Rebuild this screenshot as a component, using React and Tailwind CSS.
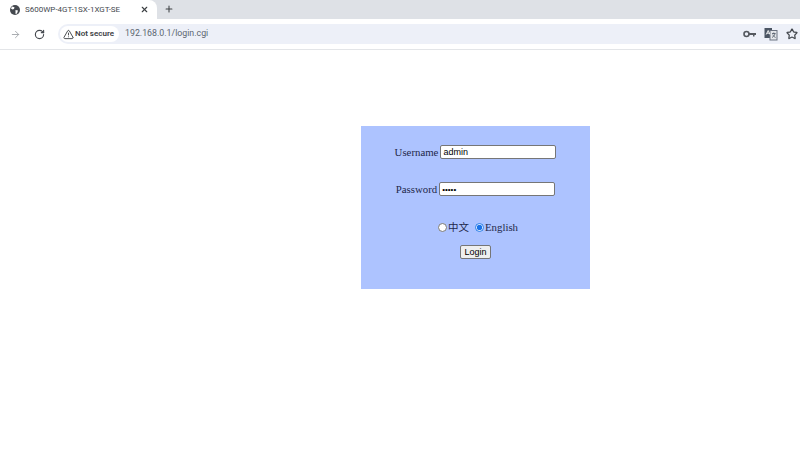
import React from 'react';
import { ArrowRight, RotateCw, X, Plus, TriangleAlert, Star } from 'lucide-react';

function GlobeIcon() {
  return (
    <svg width="10" height="10" viewBox="0 0 10 10" className="shrink-0">
      <circle cx="5" cy="5" r="5" fill="#45494f" />
      <path d="M2 1.5 L4.5 2.2 L4 4 L2.5 4.5 L1 3.5 Z M5.5 5 L8 5.5 L7 8.5 L5.5 9 Z" fill="#fff" />
    </svg>
  );
}

function KeyIcon() {
  return (
    <svg width="13" height="8" viewBox="0 0 13 8" className="shrink-0">
      <circle cx="3.5" cy="4" r="2.5" fill="none" stroke="#55595f" strokeWidth="1.6" />
      <path d="M6 3 H13 V5 H11.5 V6.5 H10 V5 H6 Z" fill="#55595f" />
    </svg>
  );
}

function TranslateIcon() {
  return (
    <svg width="14" height="14" viewBox="0 0 14 14" className="shrink-0">
      <rect x="0.5" y="1" width="7.5" height="10" fill="#4b5563" />
      <rect x="6" y="3.5" width="7" height="9.5" fill="#e5e7eb" stroke="#6b7280" strokeWidth="1" />
      <path d="M2.2 7.5 L4.2 3.5 L6 7.5 M3 6.2 H5.4" stroke="#fff" strokeWidth="0.9" fill="none" />
      <path d="M8 6.5 H11.5 M9.8 5.5 V6.5 M11 6.5 C10.6 8.5 9.4 9.8 8 10.5 M8.8 7.5 C9.4 9 10.4 10 11.6 10.5" stroke="#4b5563" strokeWidth="0.8" fill="none" />
    </svg>
  );
}

export default function App() {
  return (
    <div className="w-[800px] h-[466px] overflow-hidden bg-white font-['Liberation_Sans',sans-serif]">
      <div className="h-[19px] bg-[#dee1e6] flex items-end">
        <div className="w-[157px] h-[19px] bg-white rounded-tr-lg flex items-center pl-[10px] pr-[8px]">
          <GlobeIcon />
          <span className="ml-[5px] text-[8px] leading-none text-[#45494f] font-['Roboto',sans-serif] whitespace-nowrap">S600WP-4GT-1SX-1XGT-SE</span>
          <X size={9} strokeWidth={3} className="ml-auto text-[#3c4043]" />
        </div>
        <Plus size={10} strokeWidth={2.5} className="ml-[7px] mb-[5px] text-[#3c4043]" />
      </div>

      <div className="h-[31px] border-b border-[#e3e5e8] flex items-center pl-[10px]">
        <ArrowRight size={11} strokeWidth={2} className="text-[#a3a6ab]" />
        <RotateCw size={11} strokeWidth={2.5} className="ml-[13px] text-[#45494f]" />
        <div className="ml-[13px] w-[743px] h-[20px] rounded-l-full bg-[#edf0f8] flex items-center pl-[2px] pr-[2px]">
          <div className="h-[16px] rounded-full bg-white flex items-center pl-[3px] pr-[5px]">
            <TriangleAlert size={11} strokeWidth={2} className="text-[#3c4043]" />
            <span className="ml-[1px] text-[8px] font-semibold text-[#3c4043] font-['Roboto',sans-serif]">Not secure</span>
          </div>
          <span className="ml-[6px] text-[8.8px] text-[#5b6670] font-['Roboto',sans-serif]">192.168.0.1/login.cgi</span>
          <div className="ml-auto flex items-center">
            <KeyIcon />
            <div className="ml-[8px]"><TranslateIcon /></div>
            <Star size={12} strokeWidth={2.5} className="ml-[8px] text-[#45494f]" />
          </div>
        </div>
      </div>

      <div className="ml-[361px] mt-[76px] w-[229px] h-[163px] bg-[#adc3ff] text-[#23284a] font-['Liberation_Serif',serif] text-[10.8px] flex flex-col items-center">
        <div className="mt-[19px] h-[14px] flex items-center">
          <span>Username</span>
          <input readOnly value="admin" className="ml-[2px] w-[116px] h-[14px] bg-white border border-[#767676] rounded-[2px] px-[2px] text-[9px] text-black font-['Liberation_Sans',sans-serif] outline-none" />
        </div>
        <div className="mt-[23px] h-[14px] flex items-center">
          <span>Password</span>
          <input readOnly type="password" value="admin" className="ml-[2px] w-[116px] h-[14px] bg-white border border-[#767676] rounded-[2px] px-[2px] text-[8px] text-black font-['Liberation_Sans',sans-serif] outline-none" />
        </div>
        <div className="mt-[24px] h-[14px] flex items-center ml-[5px]">
          <input type="radio" name="lang" className="w-[9px] h-[9px] m-0" />
          <span className="ml-[1px] font-['Noto_Sans_CJK_SC',serif] text-[10.5px]">中文</span>
          <input type="radio" name="lang" defaultChecked className="ml-[6px] w-[9px] h-[9px] m-0 accent-[#1a73e8]" />
          <span className="ml-[1px]">English</span>
        </div>
        <button className="mt-[11px] w-[31px] h-[14px] bg-[#efefef] border border-[#767676] rounded-[2px] text-[9px] leading-none text-black font-['Liberation_Sans',sans-serif]">Login</button>
      </div>
    </div>
  );
}
